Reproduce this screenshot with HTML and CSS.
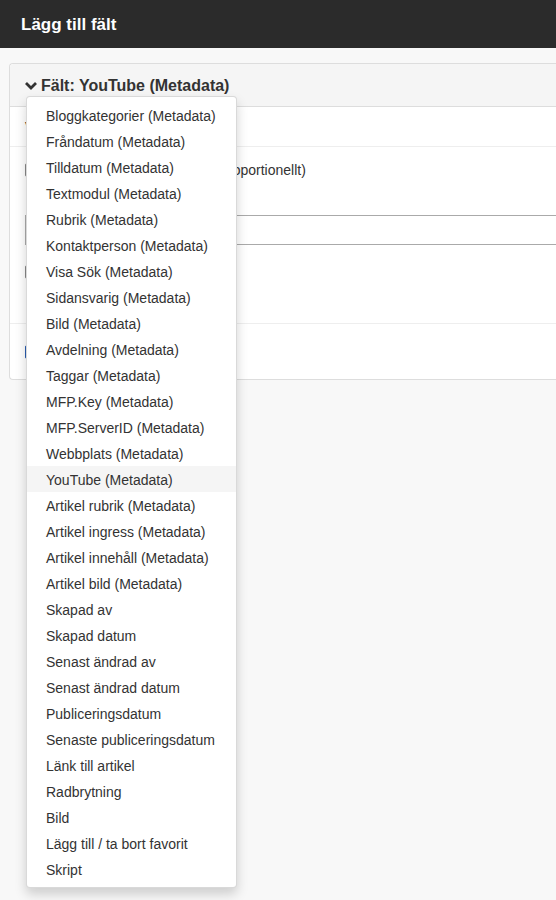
FILE: index.html
```html
<!DOCTYPE html>
<html lang="sv">
<head>
<meta charset="utf-8">
<title>Lägg till fält</title>
<link rel="stylesheet" href="styles.css">
</head>
<body>
<header class="topbar">
  <h1 class="topbar-title">Lägg till fält</h1>
</header>
<main class="content">
  <section class="panel">
    <div class="panel-heading">
      <button class="field-toggle" type="button">
        <svg class="chevron" width="14" height="10" viewBox="0 0 14 10" aria-hidden="true"><polyline points="2,2 7,7 12,2" fill="none" stroke="#333" stroke-width="2.8" stroke-linecap="butt" stroke-linejoin="miter"/></svg>
        <span>Fält: YouTube (Metadata)</span>
      </button>
      <ul class="dropdown-menu">
        <li class="menu-item">Bloggkategorier (Metadata)</li>
        <li class="menu-item">Fråndatum (Metadata)</li>
        <li class="menu-item">Tilldatum (Metadata)</li>
        <li class="menu-item">Textmodul (Metadata)</li>
        <li class="menu-item">Rubrik (Metadata)</li>
        <li class="menu-item">Kontaktperson (Metadata)</li>
        <li class="menu-item">Visa Sök (Metadata)</li>
        <li class="menu-item">Sidansvarig (Metadata)</li>
        <li class="menu-item">Bild (Metadata)</li>
        <li class="menu-item">Avdelning (Metadata)</li>
        <li class="menu-item">Taggar (Metadata)</li>
        <li class="menu-item">MFP.Key (Metadata)</li>
        <li class="menu-item">MFP.ServerID (Metadata)</li>
        <li class="menu-item">Webbplats (Metadata)</li>
        <li class="menu-item is-active">YouTube (Metadata)</li>
        <li class="menu-item">Artikel rubrik (Metadata)</li>
        <li class="menu-item">Artikel ingress (Metadata)</li>
        <li class="menu-item">Artikel innehåll (Metadata)</li>
        <li class="menu-item">Artikel bild (Metadata)</li>
        <li class="menu-item">Skapad av</li>
        <li class="menu-item">Skapad datum</li>
        <li class="menu-item">Senast ändrad av</li>
        <li class="menu-item">Senast ändrad datum</li>
        <li class="menu-item">Publiceringsdatum</li>
        <li class="menu-item">Senaste publiceringsdatum</li>
        <li class="menu-item">Länk till artikel</li>
        <li class="menu-item">Radbrytning</li>
        <li class="menu-item">Bild</li>
        <li class="menu-item">Lägg till / ta bort favorit</li>
        <li class="menu-item">Skript</li>
      </ul>
    </div>
    <div class="panel-body">
      <div class="field-row row-label">
        <span class="row-text">Visa som inbäddad video</span>
      </div>
      <div class="field-row row-options">
        <label class="check"><span class="box"></span><span>Anpassa videostorlek (skala proportionellt)</span></label>
        <div class="text-input"></div>
        <label class="check"><span class="box"></span><span>Visa kontroller</span></label>
      </div>
      <div class="field-row row-link">
        <label class="check"><span class="box box-checked"></span><a class="link" href="#">Förhandsgranska video:</a></label>
      </div>
    </div>
  </section>
</main>
</body>
</html>
```
FILE: styles.css
```css
html, body {
  margin: 0;
  padding: 0;
}

body {
  min-height: 100vh;
  background: #f8f8f8;
  font-family: "Helvetica Neue", "Liberation Sans", Arial, sans-serif;
  font-size: 14px;
  color: #333;
}

.topbar {
  height: 48px;
  background: #2b2b2b;
  display: flex;
  align-items: center;
  padding-left: 21px;
}

.topbar-title {
  margin: 0;
  font-size: 17px;
  font-weight: bold;
  color: #fff;
  line-height: 1;
}

.content {
  padding: 15px 0 0 9px;
}

/* the panel runs off the right edge, so it has no right border */
.panel {
  background: #fff;
  border: 1px solid #ddd;
  border-right: 0;
  border-radius: 4px 0 0 4px;
}

.panel-heading {
  position: relative;
  z-index: 2;
  height: 42px;
  background: #f5f5f5;
  border-bottom: 1px solid #ddd;
  border-radius: 4px 0 0 0;
  display: flex;
  align-items: center;
  padding-left: 14px;
}

.field-toggle {
  display: flex;
  align-items: center;
  gap: 3px;
  border: 0;
  background: none;
  padding: 1px 0 0;
  font: bold 16px "Helvetica Neue", "Liberation Sans", Arial, sans-serif;
  color: #333;
}

.chevron {
  display: block;
}

.dropdown-menu {
  position: absolute;
  top: 32px;
  left: 16px;
  z-index: 10;
  width: 209px;
  margin: 0;
  padding: 5px 0;
  list-style: none;
  background: #fff;
  border: 1px solid rgba(0, 0, 0, 0.15);
  border-radius: 4px;
  box-shadow: 0 6px 12px rgba(0, 0, 0, 0.175);
}

.menu-item {
  padding: 4px 20px 2px 19px;
  line-height: 20px;
  white-space: nowrap;
  color: #333;
}

.menu-item.is-active {
  background: #f5f5f5;
}

.field-row {
  border-bottom: 1px solid #eee;
  padding-left: 15px;
}

.field-row:last-child {
  border-bottom: 0;
}

.row-label {
  height: 39px;
  display: flex;
  align-items: center;
}

.row-options {
  height: 177px;
  display: flex;
  flex-direction: column;
  padding-top: 13px;
  box-sizing: border-box;
}

.row-link {
  height: 55px;
  display: flex;
  align-items: center;
}

.check {
  display: flex;
  align-items: center;
  gap: 3px;
  line-height: 20px;
}

.box {
  width: 12px;
  height: 12px;
  border: 1px solid #888;
  border-radius: 2px;
  background: #fff;
  flex: none;
}

.box-checked {
  background: #2a5db0;
  border-color: #2a5db0;
}

.text-input {
  height: 28px;
  margin-top: 35px;
  margin-bottom: 17px;
  border: 1px solid #aaa;
  border-right: 0;
}

.link {
  color: #1f3f8f;
  text-decoration: none;
}
```
